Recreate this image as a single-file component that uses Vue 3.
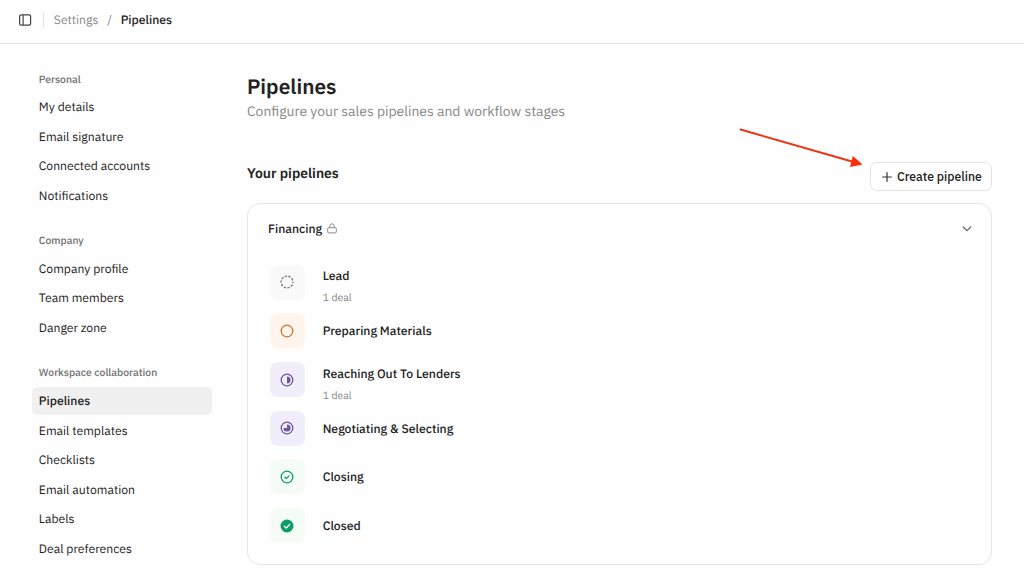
<template>
  <div class="page">
    <header class="topbar">
      <svg class="panel" viewBox="0 0 14 14" fill="none" stroke="#444" stroke-width="1.2">
        <rect x="1.6" y="1.8" width="11" height="10.4" rx="1.6" />
        <path d="M5.1 2v10" />
      </svg>
      <span class="divider"></span>
      <span class="crumb">Settings</span>
      <span class="slash">/</span>
      <span class="crumb current">Pipelines</span>
    </header>

    <div class="body">
      <nav class="sidebar">
        <div class="group" v-for="group in groups" :key="group.title">
          <div class="label">{{ group.title }}</div>
          <ul>
            <li v-for="item in group.items" :key="item" :class="{ active: item === selected }" @click="selected = item">
              <span>{{ item }}</span>
            </li>
          </ul>
        </div>
      </nav>

      <main class="content">
        <h1>Pipelines</h1>
        <p class="subtitle">Configure your sales pipelines and workflow stages</p>

        <div class="heading">
          <h2>Your pipelines</h2>
          <button class="create">
            <svg viewBox="0 0 10 10" fill="none" stroke="#333" stroke-width="1.2" stroke-linecap="round">
              <path d="M5 .7v8.6M.7 5h8.6" />
            </svg>
            <span>Create pipeline</span>
          </button>
          <svg class="arrow" viewBox="0 0 124 42">
            <path d="M1.5 2.5L113 34.5" stroke="#ee3312" stroke-width="2" stroke-linecap="round" />
            <path d="M113.8 28.9L123.5 37.6L111 40.1z" fill="#fb2a08" />
          </svg>
        </div>

        <section class="card">
          <div class="cardhead" @click="open = !open">
            <span class="name">Financing</span>
            <svg class="lock" viewBox="0 0 10 11" fill="none" stroke="#8a8a8a" stroke-width="1">
              <rect x=".7" y="4.7" width="8.6" height="5.2" rx="1" />
              <path d="M2.8 4.7V3a2.2 2.2 0 0 1 4.4 0v1.7" />
            </svg>
            <svg class="chevron" viewBox="0 0 10 6" fill="none" stroke="#666" stroke-width="1.2" stroke-linecap="round" stroke-linejoin="round">
              <path d="M1.3 1L5 4.7L8.7 1" />
            </svg>
          </div>

          <div class="stages" v-if="open">
            <div class="stage" v-for="stage in stages" :key="stage.name">
              <div class="icon" :class="stage.kind">
                <svg viewBox="0 0 14 14" fill="none" stroke="currentColor" stroke-width="1.3">
                  <circle v-if="stage.kind === 'lead'" cx="7" cy="7" r="5.9" stroke-dasharray="2.4 1.307" stroke-dashoffset="1.2" />
                  <circle v-else-if="stage.kind === 'closed'" cx="7" cy="7" r="6.5" fill="currentColor" stroke="none" />
                  <circle v-else cx="7" cy="7" r="5.8" />
                  <path v-if="stage.kind === 'reaching'" d="M7 3.5a3.5 3.5 0 0 1 0 7z" fill="currentColor" stroke="none" />
                  <path v-if="stage.kind === 'negotiating'" d="M7 7V3.4a3.6 3.6 0 1 1-3.6 3.6z" fill="currentColor" stroke="none" />
                  <path v-if="stage.kind === 'closing'" d="M5 7.2l1.4 1.3L9 5.8" stroke-width="1.2" stroke-linecap="round" stroke-linejoin="round" />
                  <path v-if="stage.kind === 'closed'" d="M4.3 7.2l1.9 1.8L9.7 5.5" stroke="#fff" stroke-linecap="round" stroke-linejoin="round" />
                </svg>
              </div>
              <div class="info" :class="{ two: stage.deals }">
                <div class="stagename"><span>{{ stage.name }}</span></div>
                <div class="deals" v-if="stage.deals">{{ stage.deals }} deal</div>
              </div>
            </div>
          </div>
        </section>
      </main>
    </div>
  </div>
</template>

<script setup>
import { ref } from "vue";

const selected = ref("Pipelines");
const open = ref(true);

const groups = [
  { title: "Personal", items: ["My details", "Email signature", "Connected accounts", "Notifications"] },
  { title: "Company", items: ["Company profile", "Team members", "Danger zone"] },
  {
    title: "Workspace collaboration",
    items: ["Pipelines", "Email templates", "Checklists", "Email automation", "Labels", "Deal preferences"],
  },
];

const stages = [
  { name: "Lead", kind: "lead", deals: 1 },
  { name: "Preparing Materials", kind: "preparing" },
  { name: "Reaching Out To Lenders", kind: "reaching", deals: 1 },
  { name: "Negotiating & Selecting", kind: "negotiating" },
  { name: "Closing", kind: "closing" },
  { name: "Closed", kind: "closed" },
];
</script>

<style>
body {
  margin: 0;
  background: #fefefe;
}
</style>

<style scoped>
.page {
  height: 570px;
  overflow: hidden;
  background: #fefefe;
  color: #222;
  font-family: "IBM Plex Sans", Roboto, "Liberation Sans", sans-serif;
  font-size: 12.2px;
  text-rendering: geometricPrecision;
}
.topbar {
  height: 44px;
  padding: 0 0 3px 18px;
  box-sizing: border-box;
  border-bottom: 1px solid #e9e9e9;
  display: flex;
  align-items: center;
}
.panel {
  width: 14px;
  height: 14px;
}
.divider {
  width: 1px;
  height: 14px;
  background: #dedede;
  margin: 0 10.3px 0 10.5px;
}
.crumb {
  color: #8a8a8a;
  line-height: 16px;
}
.slash {
  color: #888;
  margin: 0 8.6px 0 9px;
}
.current {
  color: #222;
  font-weight: 500;
}
.body {
  display: flex;
}
.sidebar {
  width: 180.5px;
  padding: 21.6px 0 0 31.8px;
  display: flex;
  flex-direction: column;
  gap: 17.7px;
}
.label {
  height: 27.7px;
  line-height: 27.5px;
  padding-left: 7px;
  font-size: 10.45px;
  font-weight: 500;
  color: #707070;
}
ul {
  list-style: none;
  margin: 0;
  padding: 0;
  display: flex;
  flex-direction: column;
  gap: 2px;
}
li {
  height: 27.57px;
  line-height: 28.4px;
  padding-left: 7px;
  border-radius: 6px;
  cursor: pointer;
}
.active {
  background: #f0f0f0;
  font-weight: 500;
}
.content {
  width: 745px;
  margin-left: 34.7px;
}
h1 {
  margin: 30px 0 0;
  font-size: 20.88px;
  line-height: 26px;
  font-weight: 600;
}
.subtitle {
  margin: 2px 0 0;
  font-size: 13.92px;
  line-height: 18px;
  color: #888;
}
.heading {
  position: relative;
  margin-top: 42px;
  display: flex;
  justify-content: space-between;
}
h2 {
  margin: 2px 0 0;
  font-size: 13.92px;
  line-height: 18px;
  font-weight: 600;
}
.create {
  width: 122px;
  height: 29px;
  margin-top: 0;
  box-sizing: border-box;
  border: 1px solid #e3e3e3;
  border-radius: 7px;
  background: #fff;
  color: #222;
  font: inherit;
  font-weight: 500;
  padding: 0 0 0 11px;
  display: flex;
  align-items: center;
  gap: 5px;
}
.create svg {
  width: 10px;
  height: 10px;
}
.create span {
  padding-bottom: 1.4px;
}
/* pointer towards the create button */
.arrow {
  position: absolute;
  left: 492.5px;
  top: -35px;
  width: 124px;
  height: 42px;
}
.card {
  height: 362px;
  margin-top: 12px;
  box-sizing: border-box;
  border: 1px solid #e6e6e6;
  border-radius: 13px;
}
.cardhead {
  height: 49px;
  padding: 0 19px 0 20px;
  display: flex;
  align-items: center;
}
.name {
  font-weight: 500;
}
.lock {
  width: 10px;
  height: 11px;
  margin-left: 5px;
}
.chevron {
  width: 10px;
  height: 6px;
  margin-left: auto;
}
.stages {
  padding: 4.9px 0 0 21.7px;
}
.stage {
  height: 48.7px;
  display: flex;
  align-items: center;
  gap: 18px;
}
.icon {
  width: 35px;
  height: 35px;
  border-radius: 8px;
  display: flex;
  align-items: center;
  justify-content: center;
}
.icon svg {
  width: 14px;
  height: 14px;
}
.lead {
  background: #f9f9f9;
  color: #777;
}
.preparing {
  background: #fff5ec;
  color: #cc7436;
}
.reaching,
.negotiating {
  background: #f0eefa;
  color: #6a5a98;
}
.closing,
.closed {
  background: #f4fcf5;
  color: #0d9d65;
}
.info {
  padding-top: 0.8px;
}
.stagename {
  font-weight: 500;
  line-height: 18px;
}
.info.two {
  padding-top: 8.2px;
}
.deals {
  margin-top: 4.2px;
  font-size: 10.45px;
  line-height: 16px;
  color: #888;
}
</style>
